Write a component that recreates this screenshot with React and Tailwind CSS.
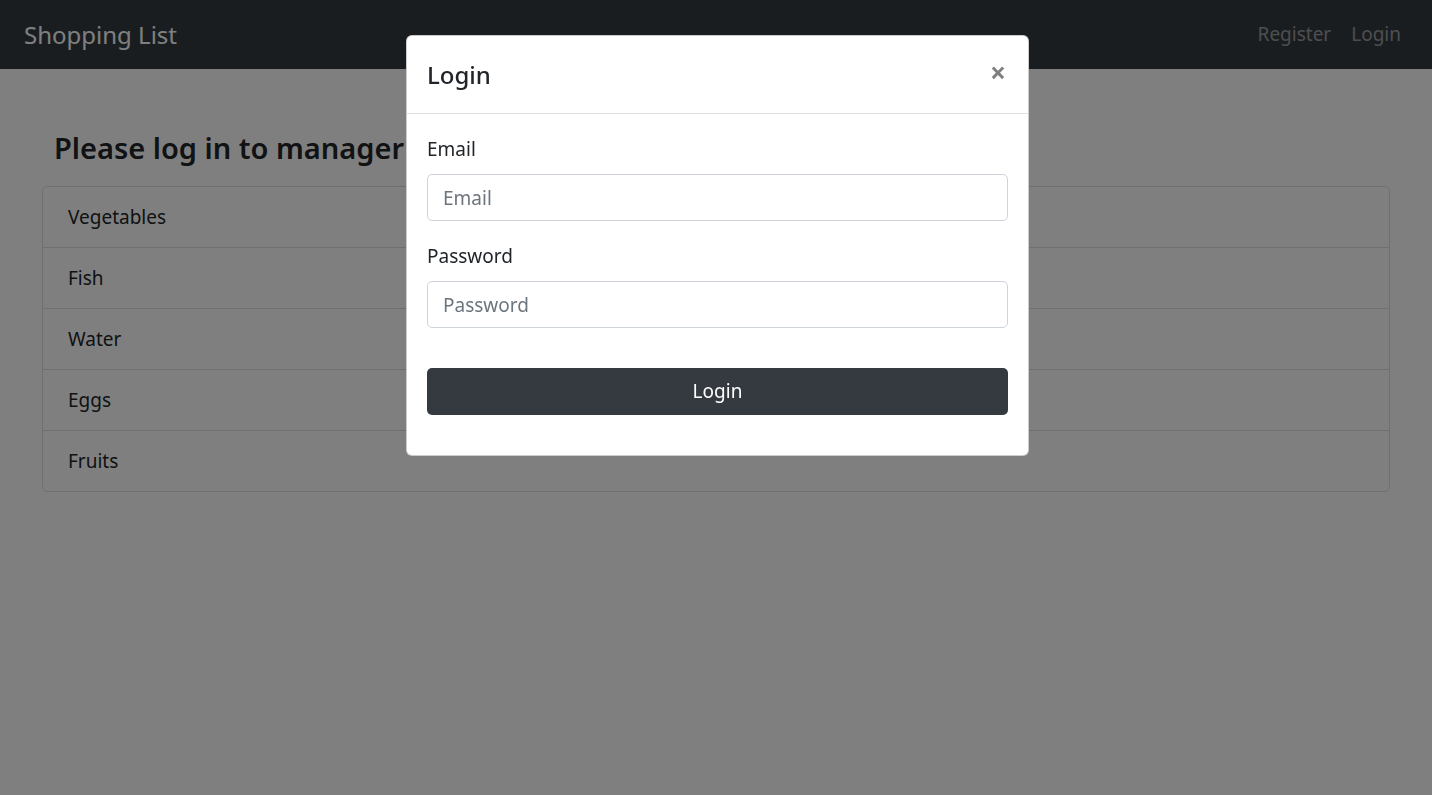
const items = ["Vegetables", "Fish", "Water", "Eggs", "Fruits"];

function Navbar() {
  return (
    <nav className="flex h-[69px] items-center justify-between bg-[#343a40] px-5">
      <a className="pl-1 text-[24px] text-white">Shopping List</a>
      <div className="flex items-center gap-5 pr-[11px] text-[19px] text-white/50">
        <a>Register</a>
        <a>Login</a>
      </div>
    </nav>
  );
}

function ItemList() {
  return (
    <main className="mx-[42px] pt-[56px]">
      <h4 className="mb-[16px] px-3 text-[29px] leading-[45px] font-semibold text-[#212529]">
        Please log in to manager items!
      </h4>
      <ul className="rounded-[5px] border border-black/[0.125]">
        {items.map((item, i) => (
          <li
            key={item}
            className={
              "px-[25px] py-[15px] text-[19px] leading-[30px] text-[#212529] " +
              (i > 0 ? "border-t border-black/[0.125]" : "")
            }
          >
            {item}
          </li>
        ))}
      </ul>
    </main>
  );
}

function Field({ label, type }) {
  return (
    <div className="mb-5">
      <label className="mb-[10px] block text-[19px] leading-[30px] text-[#212529]">{label}</label>
      <input
        type={type}
        placeholder={label}
        className="block h-[47px] w-full rounded-[5px] border border-[#ced4da] px-[15px] text-[19px] text-[#495057] outline-none placeholder:text-[#6c757d]"
      />
    </div>
  );
}

function LoginModal() {
  return (
    <div className="fixed inset-0 bg-black/50 pl-[3px]">
      <div className="mx-auto mt-[35px] w-[623px] rounded-[6px] border border-black/20 bg-white">
        <div className="flex items-center justify-between border-b border-[#dee2e6] px-5 py-5">
          <h5 className="text-[24px] leading-[37px] font-medium text-[#212529]">Login</h5>
          <button className="-mt-[5px] mr-[2px] text-[28px] leading-none font-bold text-black/50">×</button>
        </div>
        <div className="p-5 pb-10">
          <Field label="Email" type="email" />
          <Field label="Password" type="password" />
          <button className="mt-[40px] block h-[47px] w-full rounded-[5px] bg-[#343a40] text-[19px] text-white">
            Login
          </button>
        </div>
      </div>
    </div>
  );
}

export default function App() {
  return (
    <div className="relative min-h-[795px] bg-white font-['Segoe_UI','Noto_Sans',sans-serif]">
      <Navbar />
      <ItemList />
      <LoginModal />
    </div>
  );
}
